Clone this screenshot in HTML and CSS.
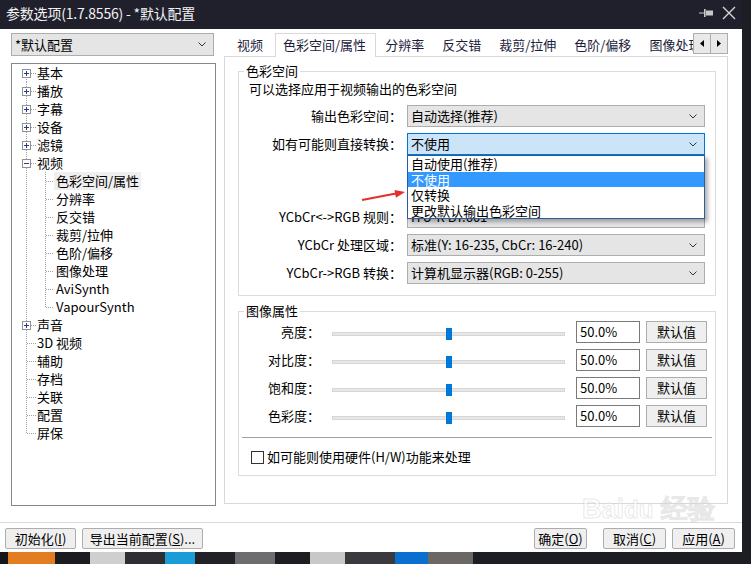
FILE: index.html
```html
<!DOCTYPE html>
<html>
<head>
    <title>参数选项</title>
    <link rel="stylesheet" href="styles.css">
</head>
<body>
    <svg width="0" height="0" class="defs">
        <symbol id="plus" viewBox="0 0 9 9"><rect x=".5" y=".5" width="8" height="8" fill="#fff" stroke="#919191"/><path d="M2 4.5H7M4.5 2V7" stroke="#24408c"/></symbol>
        <symbol id="minus" viewBox="0 0 9 9"><rect x=".5" y=".5" width="8" height="8" fill="#fff" stroke="#919191"/><path d="M2 4.5H7" stroke="#24408c"/></symbol>
        <symbol id="chev" viewBox="0 0 8 5"><path d="M.5 .5L4 4 7.5 .5" fill="none" stroke="#333"/></symbol>
    </svg>

    <div class="window">
        <div class="titlebar">
            <span class="title">参数选项(1.7.8556) - *默认配置</span>
            <span class="title-btns">
                <svg width="15" height="10" viewBox="0 0 15 10"><path d="M0 5H6" stroke="#c8c8c8"/><rect x="5" y="1" width="1.6" height="8" fill="#c8c8c8"/><rect x="7" y="2.5" width="7" height="5" fill="#c8c8c8"/></svg>
                <svg width="14" height="14" viewBox="0 0 14 14"><path d="M1 1L13 13M13 1L1 13" stroke="#d6d6d6" stroke-width="1.4"/></svg>
            </span>
        </div>

        <div class="main">
            <div class="side">
                <div class="combo profile">
                    <span class="combo-text">*默认配置</span>
                    <svg class="chev"><use href="#chev"/></svg>
                </div>
                <div class="tree">
                    <div class="node first"><svg class="exp"><use href="#plus"/></svg><span class="label">基本</span></div>
                    <div class="node"><svg class="exp"><use href="#plus"/></svg><span class="label">播放</span></div>
                    <div class="node"><svg class="exp"><use href="#plus"/></svg><span class="label">字幕</span></div>
                    <div class="node"><svg class="exp"><use href="#plus"/></svg><span class="label">设备</span></div>
                    <div class="node"><svg class="exp"><use href="#plus"/></svg><span class="label">滤镜</span></div>
                    <div class="node"><svg class="exp"><use href="#minus"/></svg><span class="label">视频</span></div>
                    <div class="node child"><span class="label selected">色彩空间/属性</span></div>
                    <div class="node child"><span class="label">分辨率</span></div>
                    <div class="node child"><span class="label">反交错</span></div>
                    <div class="node child"><span class="label">裁剪/拉伸</span></div>
                    <div class="node child"><span class="label">色阶/偏移</span></div>
                    <div class="node child"><span class="label">图像处理</span></div>
                    <div class="node child"><span class="label">AviSynth</span></div>
                    <div class="node child last-child"><span class="label">VapourSynth</span></div>
                    <div class="node"><svg class="exp"><use href="#plus"/></svg><span class="label">声音</span></div>
                    <div class="node"><span class="no-exp"></span><span class="label">3D 视频</span></div>
                    <div class="node"><span class="no-exp"></span><span class="label">辅助</span></div>
                    <div class="node"><span class="no-exp"></span><span class="label">存档</span></div>
                    <div class="node"><span class="no-exp"></span><span class="label">关联</span></div>
                    <div class="node"><span class="no-exp"></span><span class="label">配置</span></div>
                    <div class="node last"><span class="no-exp"></span><span class="label">屏保</span></div>
                </div>
            </div>

            <div class="content">
                <div class="tabbar">
                    <div class="tabs">
                        <div class="tab">视频</div>
                        <div class="tab active">色彩空间/属性</div>
                        <div class="tab">分辨率</div>
                        <div class="tab">反交错</div>
                        <div class="tab">裁剪/拉伸</div>
                        <div class="tab">色阶/偏移</div>
                        <div class="tab">图像处理</div>
                    </div>
                    <div class="tab-scroll">
                        <button><svg width="4" height="7" viewBox="0 0 4 7"><path d="M4 0V7L0 3.5Z" fill="#000"/></svg></button>
                        <button><svg width="4" height="7" viewBox="0 0 4 7"><path d="M0 0V7L4 3.5Z" fill="#000"/></svg></button>
                    </div>
                </div>

                <div class="pane">
                    <fieldset class="group">
                        <legend>色彩空间</legend>
                        <div class="desc">可以选择应用于视频输出的色彩空间</div>
                        <div class="field first">
                            <span class="field-label">输出色彩空间：</span>
                            <div class="combo"><span class="combo-text">自动选择(推荐)</span><svg class="chev"><use href="#chev"/></svg></div>
                        </div>
                        <div class="field">
                            <span class="field-label">如有可能则直接转换：</span>
                            <div class="combo open">
                                <span class="combo-text">不使用</span><svg class="chev"><use href="#chev"/></svg>
                                <div class="dropdown">
                                    <div>自动使用(推荐)</div>
                                    <div class="selected">不使用</div>
                                    <div>仅转换</div>
                                    <div>更改默认输出色彩空间</div>
                                </div>
                            </div>
                        </div>
                        <div class="field spaced">
                            <span class="field-label">YCbCr&lt;-&gt;RGB 规则：</span>
                            <div class="combo"><span class="combo-text">ITU-R BT.601</span><svg class="chev"><use href="#chev"/></svg></div>
                        </div>
                        <div class="field">
                            <span class="field-label">YCbCr 处理区域：</span>
                            <div class="combo"><span class="combo-text">标准(Y: 16-235, CbCr: 16-240)</span><svg class="chev"><use href="#chev"/></svg></div>
                        </div>
                        <div class="field">
                            <span class="field-label">YCbCr-&gt;RGB 转换：</span>
                            <div class="combo"><span class="combo-text">计算机显示器(RGB: 0-255)</span><svg class="chev"><use href="#chev"/></svg></div>
                        </div>
                    </fieldset>

                    <fieldset class="group props">
                        <legend>图像属性</legend>
                        <div class="prop-row first">
                            <span class="prop-label">亮度：</span>
                            <div class="slider"><div class="track"></div><div class="thumb" style="left: 50%"></div></div>
                            <div class="value">50.0%</div>
                            <div class="btn">默认值</div>
                        </div>
                        <div class="prop-row">
                            <span class="prop-label">对比度：</span>
                            <div class="slider"><div class="track"></div><div class="thumb" style="left: 50%"></div></div>
                            <div class="value">50.0%</div>
                            <div class="btn">默认值</div>
                        </div>
                        <div class="prop-row">
                            <span class="prop-label">饱和度：</span>
                            <div class="slider"><div class="track"></div><div class="thumb" style="left: 50%"></div></div>
                            <div class="value">50.0%</div>
                            <div class="btn">默认值</div>
                        </div>
                        <div class="prop-row">
                            <span class="prop-label">色彩度：</span>
                            <div class="slider"><div class="track"></div><div class="thumb" style="left: 50%"></div></div>
                            <div class="value">50.0%</div>
                            <div class="btn">默认值</div>
                        </div>
                        <div class="sep"></div>
                        <div class="check-row">
                            <span class="checkbox"></span>
                            <span>如可能则使用硬件(H/W)功能来处理</span>
                        </div>
                    </fieldset>
                </div>
            </div>
        </div>

        <div class="footer">
            <div class="btn init">初始化(<u>I</u>)</div>
            <div class="btn export">导出当前配置(<u>S</u>)...</div>
            <div class="btn ok">确定(<u>O</u>)</div>
            <div class="btn cancel">取消(<u>C</u>)</div>
            <div class="btn apply">应用(<u>A</u>)</div>
        </div>

        <!-- annotation + watermark over the screenshot -->
        <svg class="arrow" width="54" height="20" viewBox="0 0 54 20">
            <path d="M6 14L40 7.6" stroke="#e2302b" stroke-width="2"/>
            <path d="M49 6L39.9 11.7 38.5 3.9Z" fill="#e2302b"/>
        </svg>
        <div class="watermark">Bai<span>du</span> 经验</div>
    </div>

    <div class="desktop">
        <span style="width: 8px; background: #16161a"></span>
        <span style="width: 47px; background: #e27d22"></span>
        <span style="width: 35px; background: #1b1b20"></span>
        <span style="width: 35px; background: #cfcfcf"></span>
        <span style="width: 40px; background: #2e2e33"></span>
        <span style="width: 30px; background: #1c9cd6"></span>
        <span style="width: 40px; background: #222226"></span>
        <span style="width: 40px; background: #6d6d70"></span>
        <span style="width: 35px; background: #1d1d22"></span>
        <span style="width: 35px; background: #c8c8c8"></span>
        <span style="width: 50px; background: #3a3a3e"></span>
        <span style="width: 33px; background: #0b6fd0"></span>
        <span style="width: 45px; background: #6a6765"></span>
    </div>
</body>
</html>
```

FILE: styles.css
```css
* {
    box-sizing: border-box;
}

body {
    margin: 0;
    width: 751px;
    height: 564px;
    overflow: hidden;
    background: #1d1d24;
    font-family: "Noto Sans CJK SC", "Liberation Sans", sans-serif;
    font-size: 13px;
    color: #000;
}

.defs {
    position: absolute;
}

.window {
    position: relative;
    width: 742px;
    height: 552px;
    background: #fff;
    display: flex;
    flex-direction: column;
}

/* title bar */
.titlebar {
    flex: none;
    height: 29px;
    background: #20202c;
    color: #f2f2f2;
    font-size: 14px;
    display: flex;
    align-items: center;
    padding: 0 0 3px 6px;
}

.title {
    flex: 1;
    line-height: 20px;
    letter-spacing: -0.2px;
}

.title-btns {
    display: flex;
    align-items: center;
    gap: 8px;
    padding-right: 6px;
}

/* main area */
.main {
    flex: 1;
    display: flex;
    gap: 8px;
    padding-left: 11px;
}

.side {
    width: 205px;
    padding-top: 4px;
}

.combo {
    display: flex;
    align-items: center;
    height: 22px;
    border: 1px solid #adadad;
    background: #e5e5e5;
    padding: 0 7px 0 3px;
    position: relative;
}

.combo-text {
    flex: 1;
    line-height: 20px;
    white-space: nowrap;
    overflow: hidden;
}

.chev {
    width: 8px;
    height: 5px;
    flex: none;
}

.profile {
    width: 203px;
    height: 23px;
}

.tree {
    margin-top: 7px;
    height: 443px;
    border: 1px solid #828790;
    background: #fff;
}

.node {
    height: 18px;
    display: flex;
    align-items: center;
    padding-left: 10px;
    background:
        repeating-linear-gradient(to right, #a0a0a0 0 1px, transparent 1px 2px) 15px 9px / 10px 1px no-repeat,
        repeating-linear-gradient(to bottom, #a0a0a0 0 1px, transparent 1px 2px) 14px 0 / 1px 18px no-repeat;
}

.node.first {
    background:
        repeating-linear-gradient(to right, #a0a0a0 0 1px, transparent 1px 2px) 15px 9px / 10px 1px no-repeat,
        repeating-linear-gradient(to bottom, #a0a0a0 0 1px, transparent 1px 2px) 14px 9px / 1px 9px no-repeat;
}

.node.last {
    background:
        repeating-linear-gradient(to right, #a0a0a0 0 1px, transparent 1px 2px) 15px 9px / 10px 1px no-repeat,
        repeating-linear-gradient(to bottom, #a0a0a0 0 1px, transparent 1px 2px) 14px 0 / 1px 10px no-repeat;
}

.node.child {
    padding-left: 42px;
    background:
        repeating-linear-gradient(to right, #a0a0a0 0 1px, transparent 1px 2px) 34px 9px / 8px 1px no-repeat,
        repeating-linear-gradient(to bottom, #a0a0a0 0 1px, transparent 1px 2px) 33px 0 / 1px 18px no-repeat,
        repeating-linear-gradient(to bottom, #a0a0a0 0 1px, transparent 1px 2px) 14px 0 / 1px 18px no-repeat;
}

.node.child.last-child {
    background:
        repeating-linear-gradient(to right, #a0a0a0 0 1px, transparent 1px 2px) 34px 9px / 8px 1px no-repeat,
        repeating-linear-gradient(to bottom, #a0a0a0 0 1px, transparent 1px 2px) 33px 0 / 1px 10px no-repeat,
        repeating-linear-gradient(to bottom, #a0a0a0 0 1px, transparent 1px 2px) 14px 0 / 1px 18px no-repeat;
}

.exp, .no-exp {
    width: 9px;
    height: 9px;
    flex: none;
    margin-right: 6px;
}

.label {
    line-height: 18px;
    white-space: nowrap;
}

.child .label {
    padding: 0 2px;
}

.label.selected {
    background: #efefef;
}

/* tabs */
.content {
    width: 504px;
    padding-top: 4px;
}

.tabbar {
    position: relative;
    z-index: 1;
    display: flex;
    height: 24px;
}

.tabs {
    width: 469px;
    display: flex;
    align-items: flex-start;
    overflow: hidden;
    padding-left: 4px;
    white-space: nowrap;
}

.tab {
    flex: none;
    height: 23px;
    line-height: 23px;
    padding: 0 9px;
    color: #1c1c3a;
}

.tab.active {
    height: 24px;
    line-height: 22px;
    margin-left: 3px;
    padding: 0 9px 0 7px;
    background: #fff;
    border: 1px solid #d9d9d9;
    border-bottom: 0;
}

.tab-scroll {
    display: flex;
    height: 21px;
}

.tab-scroll button {
    width: 18px;
    height: 21px;
    padding: 0;
    border: 1px solid #adadad;
    background: #e9e9e9;
    display: flex;
    align-items: center;
    justify-content: center;
}

.tab-scroll button + button {
    margin-left: -1px;
}

.pane {
    height: 448px;
    margin-top: -1px;
    border: 1px solid #d9d9d9;
    padding: 0 11px 0 13px;
}

/* group boxes */
.group {
    margin: 6px 0 0;
    padding: 0 0 11px;
    border: 1px solid #dcdcdc;
    min-width: 0;
}

.group legend {
    margin-left: 5px;
    padding: 0 2px;
    line-height: 16px;
}

.group.props {
    margin-top: 7px;
    padding-bottom: 9px;
}

.desc {
    margin: 1px 0 0 10px;
    line-height: 18px;
}

.field {
    display: flex;
    height: 22px;
    margin-top: 6px;
}

.field.first {
    margin-top: 7px;
}

.field.spaced {
    margin-top: 51px;
}

.field-label {
    width: 163px;
    text-align: right;
    line-height: 22px;
    white-space: nowrap;
}

.field .combo {
    margin-left: 5px;
    width: 298px;
}

.combo.open {
    background: #cce4f7;
    border-color: #0078d7;
}

.dropdown {
    position: absolute;
    top: calc(100% + 1px);
    left: -1px;
    width: 298px;
    border: 1px solid #2d5d9b;
    background: #fff;
    box-shadow: 3px 3px 4px rgba(0, 0, 0, 0.3);
    z-index: 5;
}

.dropdown div {
    height: 15.5px;
    line-height: 15.5px;
    padding-left: 3px;
}

.dropdown .selected {
    background: #3399ff;
    color: #fff;
}

/* image property rows */
.prop-row {
    display: flex;
    height: 22px;
    margin-top: 6px;
}

.prop-row.first {
    margin-top: 2px;
}

.prop-label {
    width: 81px;
    text-align: right;
    line-height: 22px;
}

.slider {
    position: relative;
    width: 233px;
    margin-left: 12px;
}

.track {
    margin-top: 11px;
    height: 4px;
    background: #e7e7e7;
    border: 1px solid #d6d6d6;
}

.thumb {
    position: absolute;
    top: 7px;
    width: 6px;
    height: 12px;
    margin-left: -3px;
    background: #0078d7;
}

.value {
    margin-left: 11px;
    width: 64px;
    border: 1px solid #7a7a7a;
    padding-left: 3px;
    line-height: 20px;
}

.btn {
    margin-left: 6px;
    width: 61px;
    border: 1px solid #adadad;
    background: #efefef;
    text-align: center;
    line-height: 20px;
    white-space: nowrap;
}

.sep {
    margin: 10px 3px 0;
    border-top: 1px solid #a0a0a0;
}

.check-row {
    display: flex;
    align-items: center;
    height: 18px;
    margin-top: 10px;
    padding-left: 12px;
    line-height: 18px;
}

.checkbox {
    width: 13px;
    height: 13px;
    border: 1px solid #333;
    margin-right: 3px;
}

/* bottom buttons */
.footer {
    flex: none;
    height: 30px;
    border-top: 1px solid #dadada;
    display: flex;
    padding: 5px 7px 0 5px;
}

.footer .btn {
    height: 21px;
    line-height: 19px;
    margin: 0;
    border-radius: 2px;
}

.footer .init { width: 71px; }
.footer .export { width: 121px; margin-left: 6px; }
.footer .ok { width: 53px; margin-left: auto; }
.footer .cancel { width: 63px; margin-left: 16px; }
.footer .apply { width: 63px; margin-left: 6px; }

/* overlays */
.arrow {
    position: absolute;
    left: 356px;
    top: 186px;
}

.watermark {
    position: absolute;
    left: 582px;
    top: 494px;
    font-family: "Liberation Sans", sans-serif;
    font-weight: bold;
    font-size: 27px;
    line-height: 30px;
    color: rgba(255, 255, 255, 0.5);
    -webkit-text-stroke: 1px rgba(175, 175, 175, 0.3);
    pointer-events: none;
}

.watermark span {
    font-size: 24px;
}

.desktop {
    display: flex;
    height: 12px;
}
```
